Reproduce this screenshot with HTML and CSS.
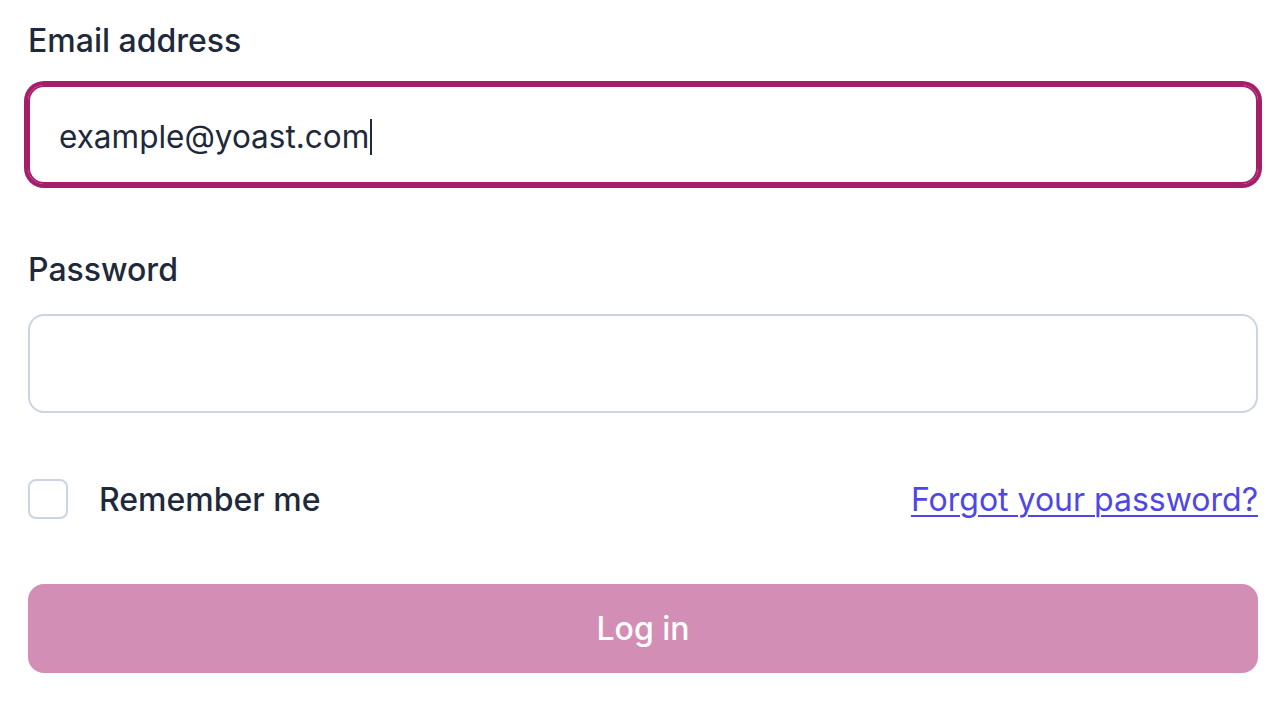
FILE: index.html
```html
<!DOCTYPE html>
<html lang="en">
  <head>
    <meta charset="UTF-8" />
    <meta name="viewport" content="width=device-width, initial-scale=1.0" />
    <title>Log in</title>
    <link rel="stylesheet" href="styles.css">
  </head>
  <body>
    <form class="login">
      <div class="field">
        <label for="email">Email address</label>
        <div class="input focus">
          <span class="value">example@yoast.com</span><span class="caret"></span>
        </div>
      </div>
      <div class="field">
        <label for="password">Password</label>
        <div class="input"></div>
      </div>
      <div class="row">
        <label class="check">
          <span class="box"></span>
          <span>Remember me</span>
        </label>
        <a href="#" class="forgot">Forgot your password?</a>
      </div>
      <button type="button" class="submit">Log in</button>
    </form>
  </body>
</html>
```

FILE: styles.css
```css
* {
  margin: 0;
  padding: 0;
  box-sizing: border-box;
}
body {
  background-color: #ffffff;
  font-family: Inter, "Noto Sans", sans-serif;
  color: #1e293b;
}
.login {
  width: 1230px;
  margin-left: 28px;
  padding-top: 21px;
}
.field {
  margin-bottom: 66px;
}
.field label {
  display: block;
  font-size: 32px;
  line-height: 40px;
  font-weight: 500;
  margin-bottom: 24px;
}
.input {
  height: 99px;
  border: 2px solid #cbd5e1;
  border-radius: 16px;
  padding-left: 29px;
  padding-top: 4px;
  display: flex;
  align-items: center;
  font-size: 31.5px;
  color: #1e293b;
}
.input.focus {
  border-color: #a61e69;
  box-shadow: 0 0 0 4px #a61e69;
}
.caret {
  display: inline-block;
  width: 2px;
  height: 36px;
  background: #1e293b;
  margin-left: 1px;
}
.row {
  display: flex;
  justify-content: space-between;
  align-items: center;
  height: 40px;
  margin-bottom: 65px;
  font-size: 32px;
}
.check {
  display: flex;
  align-items: center;
  gap: 31px;
  font-weight: 500;
}
.check .box {
  width: 40px;
  height: 40px;
  border: 2px solid #cbd5e1;
  border-radius: 8px;
}
.forgot {
  color: #4f46e5;
  text-decoration: underline;
  text-underline-offset: 4px;
  text-decoration-thickness: 2px;
}
.submit {
  display: block;
  width: 100%;
  height: 89px;
  border: none;
  border-radius: 16px;
  background: #d28eb4;
  color: #ffffff;
  font-family: Inter, "Noto Sans", sans-serif;
  font-size: 32px;
  font-weight: 500;
}
```
